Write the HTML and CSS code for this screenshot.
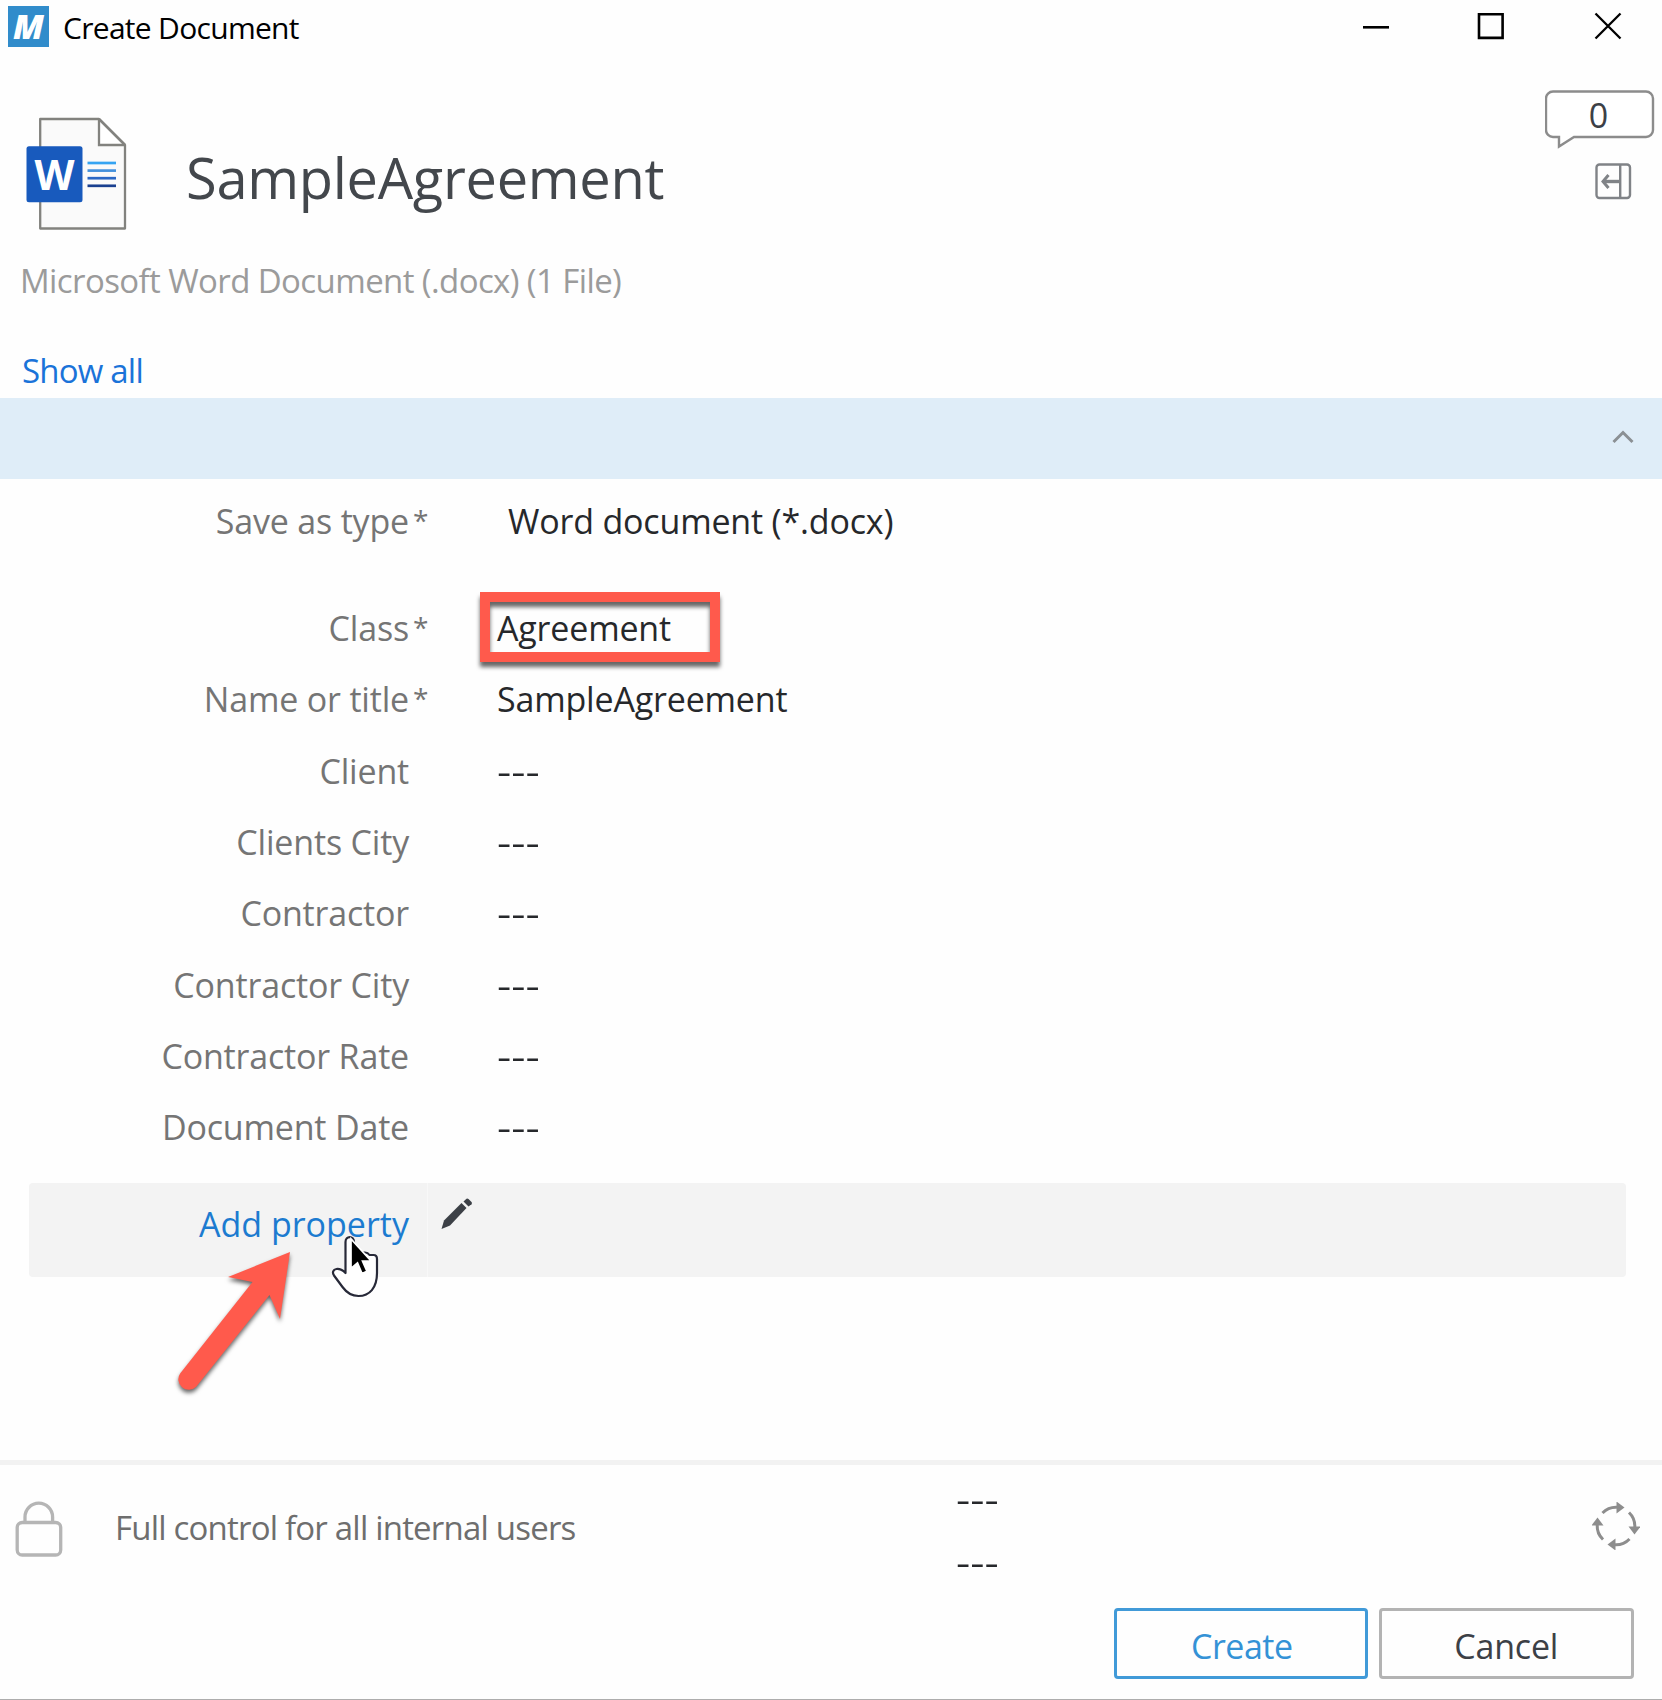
FILE: index.html
```html
<!DOCTYPE html>
<html lang="en">
<head>
<meta charset="utf-8">
<title>Create Document</title>
<link rel="stylesheet" href="styles.css">
</head>
<body>
<div class="dialog">
  <div class="titlebar">
    <span class="app-icon">M</span>
    <span class="app-title">Create Document</span>
    <svg class="controls" width="260" height="28" viewBox="0 0 260 28" fill="none" stroke="#000" stroke-width="2.6">
      <path d="M1 15.3h26"/><path d="M117 2.3h23.6v23.6H117z"/><path d="M233.5 1.5l25 25M258.500 1.500l-25 25" stroke-width="2.300"/>
    </svg>
  </div>

  <header class="header">
    <svg class="doc-icon" width="101" height="114" viewBox="0 0 101 114">
      <path d="M14.200 2h58.800l26 26v83.500H14.200z" fill="#fafafa" stroke="#82827e" stroke-width="2.300" stroke-linejoin="round"/>
      <path d="M73 2v26h26" fill="#fff" stroke="#82827e" stroke-width="2.300"/>
      <path d="M73 2l26 26" stroke="#82827e" stroke-width="2.500"/>
      <rect x="0.500" y="29.300" width="56" height="56" rx="2.500" fill="#185abd"/>
      <text x="28.500" y="72.500" text-anchor="middle" class="doc-letter" textLength="40" lengthAdjust="spacingAndGlyphs">W</text>
      <g stroke-width="2.700"><path d="M61.500 46h28.500" stroke="#35a4f2"/><path d="M61.500 53.600h28.500" stroke="#4491dc"/><path d="M61.500 61.200h28.500" stroke="#2b68c5"/><path d="M61.500 68.800h28.500" stroke="#1a4090"/></g>
    </svg>
    <h1 class="doc-title">SampleAgreement</h1>
    <div class="header-tools">
      <div class="bubble">
        <svg width="110" height="60" viewBox="0 0 110 60" fill="#fff" stroke="#8c8c8c" stroke-width="2.400">
          <path d="M8 1.500h93a7 7 0 0 1 7 7v31.500a7 7 0 0 1-7 7H29l-15 9.500V47H8a7 7 0 0 1-7-7V8.500a7 7 0 0 1 7-7z"/>
        </svg>
        <span class="bubble-count">0</span>
      </div>
      <svg class="panel-icon" width="37" height="37" viewBox="0 0 37 37" fill="none" stroke="#808387" stroke-width="2.400">
        <rect x="1.500" y="1.500" width="33.500" height="33.500" rx="3"/><path d="M25.200 1.500v33.500"/><path d="M24.500 18.500H9" stroke-width="3.400"/><path d="M13.500 12L8 18.500l5.500 6.500" stroke-width="3"/>
      </svg>
    </div>
  </header>
  <div class="subtitle">Microsoft Word Document (.docx) (1 File)</div>
  <a class="show-all">Show all</a>

  <div class="group-bar">
    <svg width="22" height="14" viewBox="0 0 22 14" fill="none" stroke="#8b9094" stroke-width="3"><path d="M1.500 12L11 2.500l9.500 9.500"/></svg>
  </div>

  <main class="form">
    <div class="row row-type"><span class="label">Save as type</span><span class="star">*</span><span class="value value-type">Word document (*.docx)</span></div>
    <div class="row"><span class="label">Class</span><span class="star">*</span><span class="value">Agreement<i class="highlight"></i></span></div>
    <div class="row"><span class="label">Name or title</span><span class="star">*</span><span class="value">SampleAgreement</span></div>
    <div class="row"><span class="label">Client</span><span></span><span class="value"><b class="dash">---</b></span></div>
    <div class="row"><span class="label">Clients City</span><span></span><span class="value"><b class="dash">---</b></span></div>
    <div class="row"><span class="label">Contractor</span><span></span><span class="value"><b class="dash">---</b></span></div>
    <div class="row"><span class="label">Contractor City</span><span></span><span class="value"><b class="dash">---</b></span></div>
    <div class="row"><span class="label">Contractor Rate</span><span></span><span class="value"><b class="dash">---</b></span></div>
    <div class="row"><span class="label">Document Date</span><span></span><span class="value"><b class="dash">---</b></span></div>

    <div class="add-row">
      <a class="add-link">Add property</a>
      <svg class="pencil" width="32" height="32" viewBox="0 0 32 32" fill="#3c4046">
        <path d="M0.500 31l2.500-8.500L20.500 5l5 5L9 27.500z"/><path d="M22.500 3.500l3-2.800q1-0.700 2 0.300l3 3q1 1 0 2.300L27.500 8.500z"/>
      </svg>
      <svg class="pointers" width="240" height="190" viewBox="160 1220 240 190">
        <path class="callout" d="M290 1252L228 1277L252.500 1282L180.300 1373.200A10.500 10.500 0 0 0 196.200 1386.800L269.500 1295L280 1319z"/>
        <path d="M345.500 1242c0-6.500 8.500-6.500 8.500 0v10.500h11c2 0 3.500 1 4.500 2.500h4c2.500 0 3.500 1.500 3.500 4v14c0 15-7.500 23-18.500 23-7 0-12-3.500-16-9l-8.500-11.500c-2-3-1-6 2.500-6.500 3.500-0.500 6 1 9 4z" fill="#fff" stroke="#272938" stroke-width="2.200" stroke-linejoin="round"/>
        <path d="M351 1239v29.500l6.500-5.500 4.500 10.500 5-2.200-4.500-10.300h8.500z" fill="#000" stroke="#fff" stroke-width="1.700"/>
      </svg>
    </div>
  </main>

  <footer class="footer">
    <div class="status">
      <svg class="lock" width="48" height="58" viewBox="0 0 48 58" fill="none" stroke="#b5b5b5" stroke-width="3.300">
        <rect x="2.200" y="21.500" width="43.500" height="32.500" rx="5"/><path d="M10 22V16a13.800 13.800 0 0 1 27.600 0v6"/>
      </svg>
      <span class="access">Full control for all internal users</span>
      <span class="states"><b class="dash">---</b><b class="dash">---</b></span>
      <svg class="sync" width="48" height="48" viewBox="-24 -24 48 48" fill="none" stroke="#8d8d8d" stroke-width="3">
        <g id="q"><path d="M-13.500 -13A18.800 18.800 0 0 1 1 -18.800"/><path d="M0.500 -24.500v12l8-6z" fill="#8d8d8d" stroke="none"/></g>
        <use href="#q" transform="rotate(90)"/><use href="#q" transform="rotate(180)"/><use href="#q" transform="rotate(270)"/>
      </svg>
    </div>
    <div class="actions"><button class="btn primary">Create</button><button class="btn">Cancel</button></div>
  </footer>
</div>
</body>
</html>
```
FILE: styles.css
```css
* { box-sizing: border-box; }
body { margin: 0; background: #fff; font-family: "Open Sans", "Noto Sans", sans-serif; font-size: 34px; color: #26282b; }
.dialog { width: 1662px; height: 1700px; display: flex; flex-direction: column; overflow: hidden; background: #fefefe; border-bottom: 1px solid #adadad; }

.titlebar { flex: none; height: 56px; display: flex; align-items: flex-start; padding: 6px 40px 0 8px; }
.app-icon { width: 41px; height: 41px; background: #318ccb; color: #fff; font: italic 800 34px/40px "Open Sans", sans-serif; text-align: center; }
.app-title { margin-left: 14px; flex: 1; font-size: 30px; line-height: 44px; letter-spacing: -0.7px; color: #000; white-space: nowrap; }
.controls { margin-top: 6px; }

.header { flex: none; height: 184px; display: flex; align-items: flex-start; }
.doc-icon { margin: 61px 0 0 26px; flex: none; }
.doc-letter { font: 700 42px "Open Sans", sans-serif; fill: #fff; }
.doc-title { margin: 81px 0 0 59px; flex: 1; font-size: 56px; font-weight: 400; line-height: 80px; letter-spacing: -0.3px; color: #43474c; }
.header-tools { width: 117px; padding-top: 34px; display: flex; flex-direction: column; }
.bubble { display: grid; height: 73px; align-items: start; }
.bubble svg, .bubble-count { grid-area: 1 / 1; }
.bubble-count { width: 107px; text-align: center; line-height: 50px; font-weight: 500; color: #3c4046; }
.panel-icon { margin-left: 50px; }

.subtitle { flex: none; padding-left: 20px; font-size: 33px; line-height: 80px; letter-spacing: -0.6px; position: relative; top: 1px; color: #9b9b9b; white-space: nowrap; }
.show-all { flex: none; margin-top: 23px; padding-left: 22px; font-size: 33px; line-height: 55px; letter-spacing: -0.8px; color: #1a73d9; }
.group-bar { flex: none; height: 81px; background: #dfedf8; display: flex; justify-content: flex-end; padding: 32px 28px 0 0; }

.form { flex: none; height: 981px; display: flex; flex-direction: column; padding-top: 7px; }
.row { flex: none; display: grid; grid-template-columns: 409px 88px 1fr; height: 71.35px; line-height: 71.35px; letter-spacing: -0.18px; white-space: nowrap; }
.row-type { margin-bottom: 35.5px; }
.label { text-align: right; color: #757575; }
.star { padding-left: 4px; font-size: 28px; line-height: 68px; color: #757575; }
.value { position: relative; }
.value-type { padding-left: 11px; }
.dash { display: inline-block; font-weight: 400; letter-spacing: 0; transform: scaleX(1.3); transform-origin: left; }
.highlight { position: absolute; left: -17px; top: -1px; width: 240px; height: 70px; border: 10px solid #ff5a4c; filter: drop-shadow(0 5px 2px rgba(0, 0, 0, .6)); }

.add-row { position: relative; flex: none; width: 1597px; height: 94px; margin: 19px 0 0 29px; background: #f3f3f3; border-radius: 4px; display: flex; align-items: flex-start; }
.add-link { width: 399px; height: 94px; text-align: right; padding-right: 18px; border-right: 1px solid #f8f8f8; line-height: 82px; color: #1c7bd0; }
.pencil { margin: 15px 0 0 13px; }
.pointers { position: absolute; left: 131px; top: 37px; }
.callout { fill: #ff5a4c; filter: drop-shadow(0 3px 2px rgba(0, 0, 0, .6)); }

.footer { flex: 1; border-top: 5px solid #f2f2f2; display: flex; flex-direction: column; }
.status { height: 143px; display: flex; align-items: flex-start; padding-left: 15px; }
.lock { margin-top: 36px; }
.access { margin-left: 52px; width: 841px; font-size: 33px; line-height: 125px; letter-spacing: -0.8px; color: #6e6e6e; white-space: nowrap; }
.states { flex: 1; display: flex; flex-direction: column; align-items: flex-start; padding-top: 3px; line-height: 63px; }
.sync { margin: 37px 22px 0 0; }
.actions { display: flex; gap: 11px; justify-content: flex-end; padding-right: 28.500px; }
.btn { width: 254.500px; height: 71px; padding: 4px 0 0; border: 3px solid #b3b3b3; border-radius: 4px; background: #fefefe; font: 400 34px/62px "Open Sans", sans-serif; letter-spacing: -0.2px; color: #3c4046; }
.primary { border-color: #419ad8; color: #3492d6; letter-spacing: -0.5px; padding-left: 2px; }
```
